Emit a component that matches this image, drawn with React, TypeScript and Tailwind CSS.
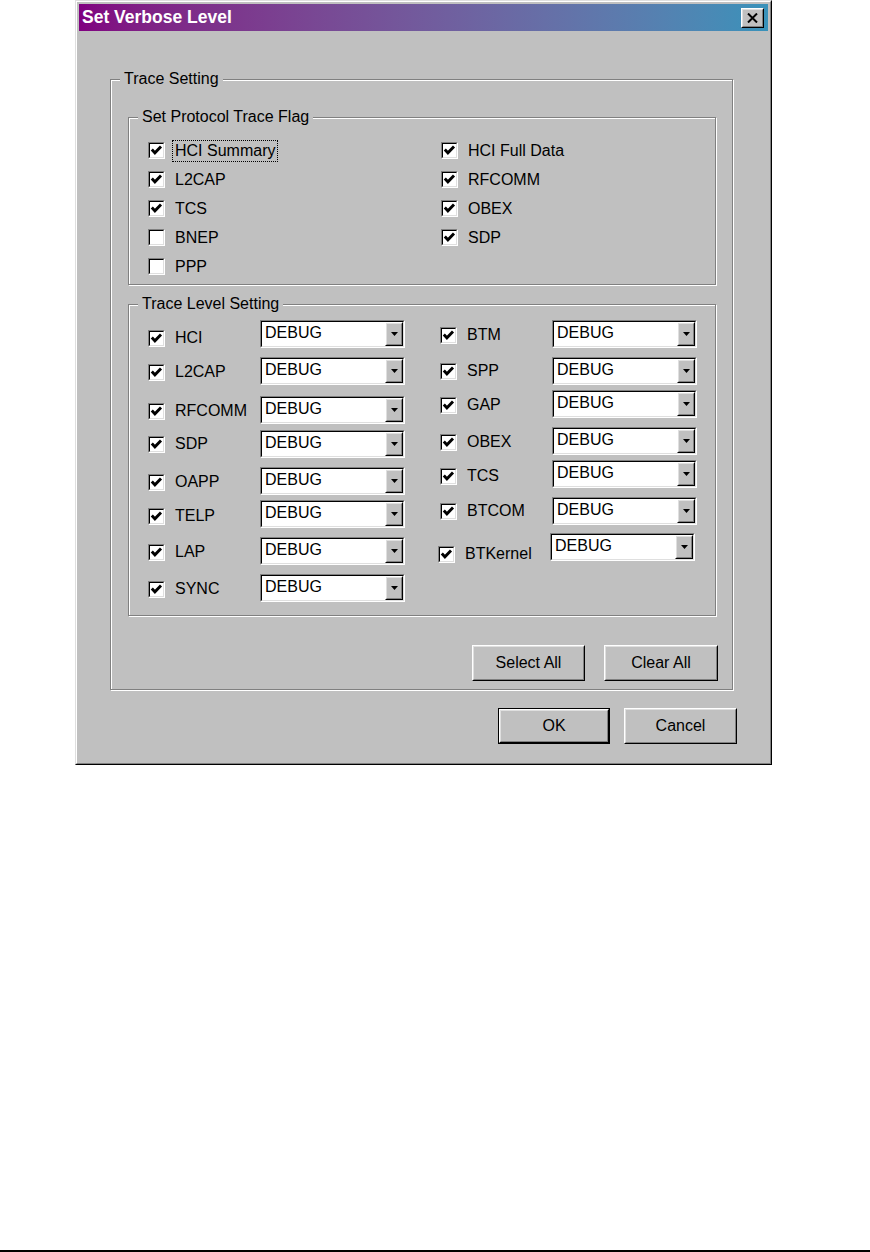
const font = "font-['Liberation_Sans',Arial,sans-serif]";

const sunkenOuter = 'border border-t-[#808080] border-l-[#808080] border-r-white border-b-white';
const sunkenInner = 'border border-t-black border-l-black border-r-[#dfdfdf] border-b-[#dfdfdf]';
const raisedOuter = 'border border-t-white border-l-white border-r-black border-b-black';
const raisedInner = 'border border-t-[#dfdfdf] border-l-[#dfdfdf] border-r-[#808080] border-b-[#808080]';
const etched = 'border border-[#808080] shadow-[inset_1px_1px_0_#fff,1px_1px_0_#fff]';

const CheckBox = ({ checked }: { checked: boolean }) => (
  <div className={`w-[17px] h-[17px] shrink-0 ${sunkenOuter}`}>
    <div className={`w-full h-full bg-white flex items-center justify-center ${sunkenInner}`}>
      {checked && (
        <svg width="13" height="13" viewBox="0 0 13 13">
          <path d="M1.8 5.6 L4.9 8.8 L11 2.6" stroke="black" strokeWidth="2.9" fill="none" />
        </svg>
      )}
    </div>
  </div>
);

const Combo = () => (
  <div className={`w-[145px] h-[28px] shrink-0 ${sunkenOuter}`}>
    <div className={`h-full bg-white flex ${sunkenInner}`}>
      <span className="flex-1 pl-[3px] pt-[2px] text-[16px] leading-[18px] text-black">DEBUG</span>
      <div className={`w-[18px] h-full ${raisedOuter}`}>
        <div className={`w-full h-full bg-[#c0c0c0] flex items-center justify-center ${raisedInner}`}>
          <svg width="7" height="4" viewBox="0 0 7 4">
            <path d="M0 0 H7 L3.5 4 Z" fill="black" />
          </svg>
        </div>
      </div>
    </div>
  </div>
);

const GroupBox = ({ title, className, children }: { title: string; className: string; children?: React.ReactNode }) => (
  <div className={`relative ${etched} ${className}`}>
    <span className="absolute -top-[10px] left-[9px] px-[4px] bg-[#c0c0c0] leading-[18px] text-[16px]">{title}</span>
    {children}
  </div>
);

const Button = ({ label, className, isDefault }: { label: string; className: string; isDefault?: boolean }) => (
  <div className={`${className} ${isDefault ? 'border border-black' : ''}`}>
    <div className={`w-full h-full ${raisedOuter}`}>
      <div className={`w-full h-full flex items-center justify-center text-[16px] ${raisedInner}`}>{label}</div>
    </div>
  </div>
);

const flagLeft = [
  { label: 'HCI Summary', checked: true, focus: true },
  { label: 'L2CAP', checked: true },
  { label: 'TCS', checked: true },
  { label: 'BNEP', checked: false },
  { label: 'PPP', checked: false },
];
const flagRight = ['HCI Full Data', 'RFCOMM', 'OBEX', 'SDP'];

const levelLeft = [
  { label: 'HCI', mt: '', shift: 'translate-y-[4px]' },
  { label: 'L2CAP', mt: 'mt-[9px]', shift: 'translate-y-[1px]' },
  { label: 'RFCOMM', mt: 'mt-[11px]', shift: 'translate-y-[1px]' },
  { label: 'SDP', mt: 'mt-[6px]', shift: '' },
  { label: 'OAPP', mt: 'mt-[9px]', shift: 'translate-y-[1px]' },
  { label: 'TELP', mt: 'mt-[5px]', shift: 'translate-y-[2px]' },
  { label: 'LAP', mt: 'mt-[9px]', shift: 'translate-y-[1px]' },
  { label: 'SYNC', mt: 'mt-[9px]', shift: 'translate-y-[1px]' },
];
const levelRight = [
  { label: 'BTM', mt: '', shift: 'translate-y-[1px]' },
  { label: 'SPP', mt: 'mt-[9px]', shift: '' },
  { label: 'GAP', mt: 'mt-[5px]', shift: 'translate-y-[1px]' },
  { label: 'OBEX', mt: 'mt-[9px]', shift: 'translate-y-[1px]' },
  { label: 'TCS', mt: 'mt-[5px]', shift: 'translate-y-[2px]' },
  { label: 'BTCOM', mt: 'mt-[9px]', shift: '' },
  { label: 'BTKernel', mt: 'mt-[8px]', shift: 'translate-y-[7px] -ml-[2px]' },
];

const LevelRow = ({ label, mt, shift }: { label: string; mt: string; shift: string }) => (
  <div className={`flex items-center ${mt}`}>
    <div className={`flex items-center gap-[10px] w-[112px] ${shift}`}>
      <CheckBox checked />
      <span className="text-[16px] leading-[18px]">{label}</span>
    </div>
    <Combo />
  </div>
);

export default function App() {
  return (
    <div className={`w-[870px] h-[1252px] bg-white flex flex-col text-black ${font}`}>
      <div className="ml-[75px] w-[697px] h-[765px] border border-t-[#dfdfdf] border-l-[#dfdfdf] border-r-black border-b-black">
        <div className="h-full bg-[#c0c0c0] p-[2px] flex flex-col border border-t-white border-l-white border-r-[#808080] border-b-[#808080]">
          {/* title bar */}
          <div className="h-[27px] flex items-center justify-between pl-[3px] pr-[4px] bg-linear-to-r from-[#800080] to-[#3892ba]">
            <span className="text-white font-bold text-[17.5px] leading-none">Set Verbose Level</span>
            <div className={`w-[23px] h-[20px] ${raisedOuter}`}>
              <div className={`w-full h-full bg-[#c0c0c0] flex items-center justify-center ${raisedInner}`}>
                <svg width="11" height="10" viewBox="0 0 11 10">
                  <path d="M1 0.5 L10 9.5 M10 0.5 L1 9.5" stroke="black" strokeWidth="2" />
                </svg>
              </div>
            </div>
          </div>

          <GroupBox title="Trace Setting" className="ml-[31px] mt-[48px] w-[623px] h-[611px] shrink-0 pl-[17px] pt-[37px] flex flex-col">
            <GroupBox title="Set Protocol Trace Flag" className="w-[588px] h-[168px] shrink-0 pl-[19px] pt-[18px] flex">
              <div className="w-[293px] flex flex-col">
                {flagLeft.map(f => (
                  <div key={f.label} className="h-[29px] flex items-center gap-[10px]">
                    <CheckBox checked={f.checked} />
                    <span
                      className={`text-[16px] leading-[18px] ${f.focus ? '-ml-[3px] px-[2px] py-[1px] border border-dotted border-black' : ''}`}
                    >
                      {f.label}
                    </span>
                  </div>
                ))}
              </div>
              <div className="flex flex-col">
                {flagRight.map(l => (
                  <div key={l} className="h-[29px] flex items-center gap-[10px]">
                    <CheckBox checked />
                    <span className="text-[16px] leading-[18px]">{l}</span>
                  </div>
                ))}
              </div>
            </GroupBox>

            <GroupBox title="Trace Level Setting" className="mt-[19px] w-[588px] h-[312px] shrink-0 pl-[19px] pt-[15px] flex">
              <div className="w-[292px] flex flex-col">
                {levelLeft.map(r => (
                  <LevelRow key={r.label} {...r} />
                ))}
              </div>
              <div className="flex flex-col">
                {levelRight.map(r => (
                  <LevelRow key={r.label} {...r} />
                ))}
              </div>
            </GroupBox>

            <div className="mt-[29px] w-[590px] flex justify-end gap-[19px]">
              <Button label="Select All" className="w-[113px] h-[36px]" />
              <Button label="Clear All" className="w-[114px] h-[36px]" />
            </div>
          </GroupBox>

          <div className="mt-[18px] pr-[31px] flex justify-end gap-[14px]">
            <Button label="OK" className="w-[112px] h-[36px]" isDefault />
            <Button label="Cancel" className="w-[113px] h-[36px]" />
          </div>
        </div>
      </div>
      <div className="mt-auto h-[2px] bg-black" />
    </div>
  );
}
